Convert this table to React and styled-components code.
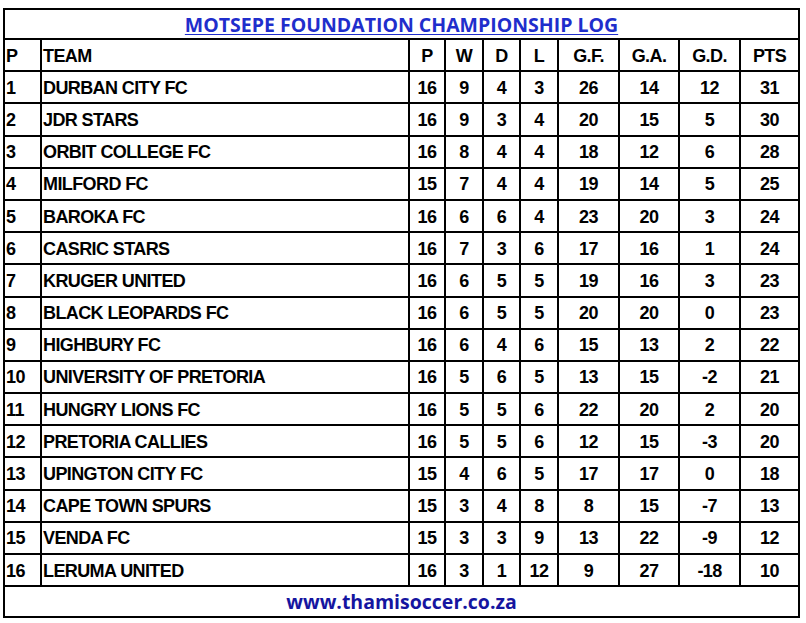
import React from 'react';
import styled, { createGlobalStyle } from 'styled-components';

const teams = [
  ['DURBAN CITY FC', 16, 9, 4, 3, 26, 14, 12, 31],
  ['JDR STARS', 16, 9, 3, 4, 20, 15, 5, 30],
  ['ORBIT COLLEGE FC', 16, 8, 4, 4, 18, 12, 6, 28],
  ['MILFORD FC', 15, 7, 4, 4, 19, 14, 5, 25],
  ['BAROKA FC', 16, 6, 6, 4, 23, 20, 3, 24],
  ['CASRIC STARS', 16, 7, 3, 6, 17, 16, 1, 24],
  ['KRUGER UNITED', 16, 6, 5, 5, 19, 16, 3, 23],
  ['BLACK LEOPARDS FC', 16, 6, 5, 5, 20, 20, 0, 23],
  ['HIGHBURY FC', 16, 6, 4, 6, 15, 13, 2, 22],
  ['UNIVERSITY OF PRETORIA', 16, 5, 6, 5, 13, 15, -2, 21],
  ['HUNGRY LIONS FC', 16, 5, 5, 6, 22, 20, 2, 20],
  ['PRETORIA CALLIES', 16, 5, 5, 6, 12, 15, -3, 20],
  ['UPINGTON CITY FC', 15, 4, 6, 5, 17, 17, 0, 18],
  ['CAPE TOWN SPURS', 15, 3, 4, 8, 8, 15, -7, 13],
  ['VENDA FC', 15, 3, 3, 9, 13, 22, -9, 12],
  ['LERUMA UNITED', 16, 3, 1, 12, 9, 27, -18, 10],
];

const widths = [37, 368, 36, 38, 37, 38, 61, 60, 61, 59];
const heads = ['P', 'W', 'D', 'L', 'G.F.', 'G.A.', 'G.D.', 'PTS'];

const Global = createGlobalStyle`
  body {
    margin: 0;
    background: #ffffff;
    font-family: "Liberation Sans", Arial, sans-serif;
  }
`;

const Page = styled.div`
  padding: 8px 0 0 3px;
`;

const Table = styled.table`
  border-collapse: collapse;
  table-layout: fixed;
  width: 797px;
  border: 2px solid #000;
  color: #000;
  font-weight: bold;
  font-size: 18px;
  letter-spacing: -0.6px;
`;

const Row = styled.tr`
  height: ${(p) => p.$h || 32.2}px;
`;

const Cell = styled.td`
  border: 2px solid #000;
  padding: ${(p) => (p.$left ? '1px 0 0 1px' : '1px 0 0')};
  text-align: ${(p) => (p.$left ? 'left' : 'center')};
  vertical-align: middle;
  white-space: nowrap;
  line-height: 1;
`;

const Banner = styled.td`
  border: 2px solid #000;
  text-align: center;
  padding: 0;
  color: ${(p) => p.$color};
  font-family: "Open Sans", "Liberation Sans", sans-serif;
  font-size: ${(p) => p.$size}px;
  letter-spacing: 0;
  text-decoration: ${(p) => (p.$underline ? 'underline' : 'none')};
  text-underline-offset: 2px;
`;

export default function App() {
  return (
    <Page>
      <Global />
      <Table>
        <colgroup>
          {widths.map((w, i) => (
            <col key={i} style={{ width: w }} />
          ))}
        </colgroup>
        <tbody>
          <Row $h={30}>
            <Banner colSpan={10} $color="#1f2ecc" $size={19.5} $underline>
              MOTSEPE FOUNDATION CHAMPIONSHIP LOG
            </Banner>
          </Row>
          <Row>
            <Cell $left>P</Cell>
            <Cell $left>TEAM</Cell>
            {heads.map((h) => (
              <Cell key={h}>{h}</Cell>
            ))}
          </Row>
          {teams.map((t, i) => (
            <Row key={t[0]}>
              <Cell $left>{i + 1}</Cell>
              <Cell $left>{t[0]}</Cell>
              {t.slice(1).map((v, j) => (
                <Cell key={j}>{v}</Cell>
              ))}
            </Row>
          ))}
          <Row $h={31}>
            <Banner colSpan={10} $color="#1515a0" $size={19.5}>
              www.thamisoccer.co.za
            </Banner>
          </Row>
        </tbody>
      </Table>
    </Page>
  );
}
